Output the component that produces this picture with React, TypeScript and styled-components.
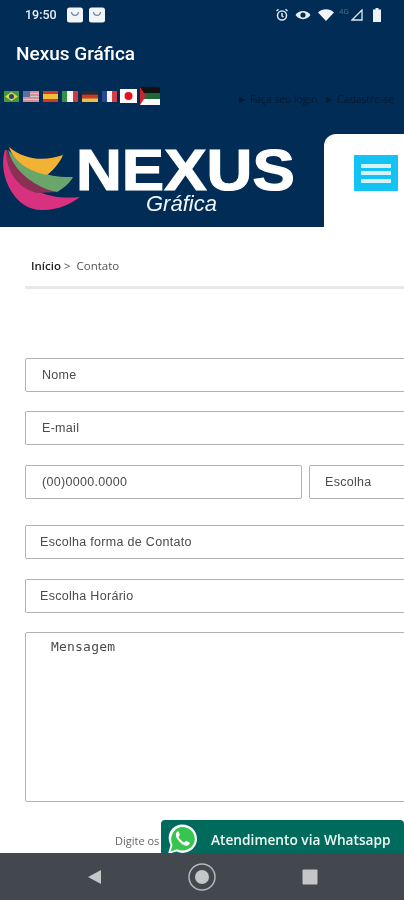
import React from "react";
import styled, { createGlobalStyle } from "styled-components";

const Global = createGlobalStyle`
  html, body { margin: 0; padding: 0; width: 404px; height: 900px; overflow: hidden; background: #fff; }
  * { box-sizing: border-box; }
`;
const Page = styled.div`
  position: relative; width: 404px; height: 900px; overflow: hidden; display: flex; flex-direction: column;
  font-family: Roboto, "Liberation Sans", sans-serif; filter: blur(0.6px); background: #fff;
`;
const Header = styled.header`background: #002c56; height: 227px; display: flex; flex-direction: column; flex: none;`;
const StatusBar = styled.div`height: 28px; padding: 1px 9px 0 25px; display: flex; align-items: center; color: #e9eef3;`;
const Clock = styled.span`font-size: 12.5px; font-weight: 500; margin-right: 8px; width: 34px;`;
const BagRow = styled.div`display: flex; gap: 6px;`;
const Spacer = styled.div`flex: 1;`;
const StatusIcons = styled.div`display: flex; align-items: center; gap: 6.500px; margin-right: 13px;`;
const NetLabel = styled.span`font-size: 8px; color: #4d6a88; margin: -6px -5px 0 -1px;`;
const Title = styled.div`color: #fff; font-size: 19px; font-weight: 500; padding: 15px 0 0 16px; height: 50px; line-height: 21px;`;
const ToolRow = styled.div`height: 56px; padding: 6px 10px 0 4px; display: flex; align-items: flex-start;`;
const Flags = styled.div`display: flex; align-items: center; gap: 4px; height: 24px;`;
const Links = styled.div`display: flex; gap: 7px; margin-left: auto; margin-top: 8px; font-size: 10.3px; color: #061a30; font-family: "Open Sans", sans-serif; white-space: nowrap;`;
const LogoRow = styled.div`flex: 1; display: flex;`;
const Logo = styled.div`position: relative; width: 324px; display: flex; align-items: flex-start;`;
const LogoMark = styled.svg`position: absolute; left: 0; top: 11px;`;
const Wordmark = styled.div`
  margin: 0 0 0 76px; padding-top: 12px; color: #fff; font: 700 58px/48px "Liberation Sans", sans-serif;
  -webkit-text-stroke: 1.2px #fff; transform: scaleX(1.095); transform-origin: left top;
`;
const Sub = styled.div`
  position: absolute; left: 146px; top: 61px; color: #f3f6fa; font: italic 400 22px/18px "Liberation Sans", sans-serif;
`;
const MenuTab = styled.div`flex: 1; background: #fff; border-top-left-radius: 12px; padding: 21px 0 0 30px;`;
const Burger = styled.button`
  width: 44px; height: 36px; background: #13c3f3; border: 0; padding: 0 7px; display: flex; flex-direction: column; justify-content: center; gap: 3.5px;
  span { display: block; height: 4px; background: #d6f3fb; }
`;
const Main = styled.main`flex: 1; min-height: 0; padding: 0 0 0 25px; overflow: hidden; width: 480px;`;
const Crumbs = styled.div`padding: 32px 0 0 6px; height: 59px; font-size: 11.5px; color: #555; font-family: "Open Sans", sans-serif; line-height: 14px;
  b { color: #222; font-weight: 600; } span { margin-left: 3px; }`;
const Rule = styled.hr`margin: 0 0 69px; border: 0; height: 3px; background: #e8e8e8; width: 400px;`;
const Field = styled.div<{ $mt?: number; $w?: number; $pl?: number; $h?: number }>`
  width: ${p => p.$w ?? 420}px; height: ${p => p.$h ?? 34}px; margin-top: ${p => p.$mt ?? 0}px; flex: none;
  border: 1.5px solid #b3b3b3; border-radius: 2px; padding: 0 0 0 ${p => p.$pl ?? 16}px; display: flex; align-items: center;
  font: 400 12.5px "Liberation Sans", sans-serif; color: #4b4b4b; letter-spacing: .3px; background: #fff;
`;
const Row = styled.div`display: flex; gap: 7px; margin-top: 20px;`;
const Message = styled(Field)`
  align-items: flex-start; padding-top: 6px; font-family: "DejaVu Sans Mono", "Liberation Mono", monospace; font-size: 13px; letter-spacing: .2px;
`;
const Captcha = styled.div`padding: 32px 0 0 90px; font: 400 11px "Open Sans", sans-serif; color: #666; line-height: 14px;`;
const Whats = styled.div`
  position: absolute; left: 161px; right: 0; bottom: 47px; height: 33px; background: #006b5d; border-radius: 4px 4px 0 0;
  display: flex; align-items: center; padding: 6px 0 0 50px; color: #eef7f4; font: 600 13.7px "Open Sans", sans-serif; white-space: nowrap;
`;
const WhatsIcon = styled.svg`position: absolute; left: 5px; top: 3px;`;
const NavBar = styled.nav`
  height: 47px; flex: none; background: #43484e; display: flex; align-items: center; justify-content: center; gap: 86px; position: relative; z-index: 1;
`;

const Bag = () => (
  <svg width="16" height="16" viewBox="0 0 16 16"><rect width="16" height="15" y=".5" rx="2.5" fill="#f2f4f6"/><path d="M4.500 5c.5 4.500 6.500 4.500 7 0" fill="none" stroke="#6f8aa6" strokeWidth="1.300"/></svg>
);
const Flag = ({ w = 16, h = 11, children }: { w?: number; h?: number; children: React.ReactNode }) => (
  <svg width={w} height={h} viewBox={`0 0 ${w} ${h}`}>{children}</svg>
);

export default function App() {
  return (
    <Page>
      <Global />
      <Header>
        <StatusBar>
          <Clock>19:50</Clock>
          <BagRow><Bag /><Bag /></BagRow>
          <Spacer />
          <StatusIcons>
            <svg width="14" height="14" viewBox="0 0 14 14" fill="none" stroke="#dfe6ec" strokeWidth="1.5"><circle cx="7" cy="7.500" r="4.500"/><path d="M7 5v3l1.500 1M1.500 3 3.500 1.200M12.500 3l-2-1.800"/></svg>
            <svg width="16" height="12" viewBox="0 0 16 12"><path d="M0.500 6C4 .5 12 .5 15.500 6 12 11.500 4 11.500.5 6z" fill="#e9eef2"/><circle cx="8" cy="6" r="2.600" fill="#002c56"/></svg>
            <svg width="16" height="12" viewBox="0 0 16 12"><path d="M0 3.500C4.500-.8 11.500-.8 16 3.500L8 12z" fill="#f3f6f8"/></svg>
            <NetLabel>4G</NetLabel>
            <svg width="12" height="12" viewBox="0 0 12 12" fill="none" stroke="#e4e9ee" strokeWidth="1.300"><path d="M11 1v10H1z"/></svg>
            <svg width="10" height="14" viewBox="0 0 10 14" style={{ marginLeft: 3 }}><path d="M3.500 0h3v1.500H9V14H1V1.500h2.500z" fill="#eef2f5"/></svg>
          </StatusIcons>
        </StatusBar>
        <Title>Nexus Gráfica</Title>
        <ToolRow>
          <Flags>
            <Flag w={15}><rect width="15" height="11" fill="#3d9a45"/><path d="M7.500 1 14 5.500 7.500 10 1 5.500z" fill="#e6d238"/><circle cx="7.500" cy="5.500" r="2.500" fill="#27457d"/></Flag>
            <Flag><rect width="16" height="11" fill="#d9c6cc"/><path d="M0 1h16M0 4h16M0 7h16M0 10h16" stroke="#c85a68" strokeWidth="1.200"/><rect width="7" height="6" fill="#5d6f9e"/></Flag>
            <Flag w={15}><rect width="15" height="11" fill="#d9352a"/><rect y="3" width="15" height="5" fill="#eec03a"/></Flag>
            <Flag><rect width="6" height="11" fill="#32904c"/><rect x="5" width="6" height="11" fill="#f5f5f2"/><rect x="11" width="5" height="11" fill="#cf3a40"/></Flag>
            <Flag><rect width="16" height="4" fill="#2a2a2a"/><rect y="3.700" width="16" height="4" fill="#d2352c"/><rect y="7.400" width="16" height="3.600" fill="#edc23c"/></Flag>
            <Flag w={15}><rect width="5" height="11" fill="#2c4796"/><rect x="5" width="5" height="11" fill="#f3f3f6"/><rect x="10" width="5" height="11" fill="#d63c44"/></Flag>
            <svg width="17" height="14" viewBox="0 0 17 14" style={{ marginLeft: -1 }}><rect width="17" height="14" fill="#fafafa"/><circle cx="8.500" cy="7" r="4" fill="#e3101f"/></svg>
            <svg width="20" height="18" viewBox="0 0 20 18" style={{ marginLeft: -1 }}><rect width="20" height="6" fill="#111"/><rect y="6" width="20" height="6" fill="#1c6a3a"/><rect y="12" width="20" height="6" fill="#fafafa"/><path d="M0 0 6 9 0 18z" fill="#c9242e"/></svg>
          </Flags>
          <Links><span>► Faça seu login</span><span>► Cadastre-se</span></Links>
        </ToolRow>
        <LogoRow>
          <Logo>
            <LogoMark width="82" height="68" viewBox="0 0 82 68">
              <path d="M5 5C-3 30 15 67 43 65 60 65 72 58 80 52 58 54 20 53 7 5z" fill="#d8317f"/>
              <path d="M6 5C6 22 14 42 37 48L57 47C40 40 18 28 6 5z" fill="#8c2f55"/>
              <path d="M8 5C13 26 36 43 57 47 64 43 70 38 73 32 50 33 28 26 8 5z" fill="#6aa56b"/>
              <path d="M9 2C13 16 30 27 47 30 54 25 60 17 63 10 46 16 26 16 9 2z" fill="#f2b233"/>
            </LogoMark>
            <Wordmark>NEXUS</Wordmark>
            <Sub>Gráfica</Sub>
          </Logo>
          <MenuTab><Burger><span /><span /><span /></Burger></MenuTab>
        </LogoRow>
      </Header>
      <Main>
        <Crumbs><b>Início</b> &gt;<span> Contato</span></Crumbs>
        <Rule />
        <Field>Nome</Field>
        <Field $mt={19}>E-mail</Field>
        <Row>
          <Field $w={277}>(00)0000.0000</Field>
          <Field $w={130} $pl={15}>Escolha</Field>
        </Row>
        <Field $mt={26} $pl={14}>Escolha forma de Contato</Field>
        <Field $mt={20} $pl={14}>Escolha Horário</Field>
        <Message $mt={19} $h={170} $pl={25}>Mensagem</Message>
        <Captcha>Digite os</Captcha>
      </Main>
      <Whats>
        <WhatsIcon width="32" height="32" viewBox="0 0 32 32">
          <path d="M2 31 4.500 22C-1 11 7 1.500 16 1.500 25 1.500 31 8 31 16 31 26 20 33 10.500 28.500z" fill="#fff"/>
          <path d="M4.500 28.500 6.500 22C2.500 13 9 4 16 4c7.500 0 12.800 5.500 12.800 12 0 8.500-9.500 14-17.800 10.200z" fill="#37c44f"/>
          <path d="M11.500 8.500c-2 1.500-2.500 4 .5 8.500 3 4 7 6.500 9.500 5.500 2-.8 2.500-2.500 2-3l-3.500-1.800-1.500 1.800c-2-.5-5-3.500-6-5.800l1.300-1.700L12.800 8.500z" fill="#fff"/>
        </WhatsIcon>
        Atendimento via Whatsapp
      </Whats>
      <NavBar>
        <svg width="15" height="16" viewBox="0 0 15 16"><path d="M14 1v14L1 8z" fill="#c4c6c8"/></svg>
        <svg width="28" height="28" viewBox="0 0 28 28" fill="none"><circle cx="14" cy="14" r="13" stroke="#b5b7ba" strokeWidth="1.500"/><circle cx="14" cy="14" r="7" fill="#c4c6c8"/></svg>
        <svg width="16" height="16" viewBox="0 0 16 16"><rect width="15" height="15" x=".5" y=".5" rx="1" fill="#c4c6c8"/></svg>
      </NavBar>
    </Page>
  );
}
